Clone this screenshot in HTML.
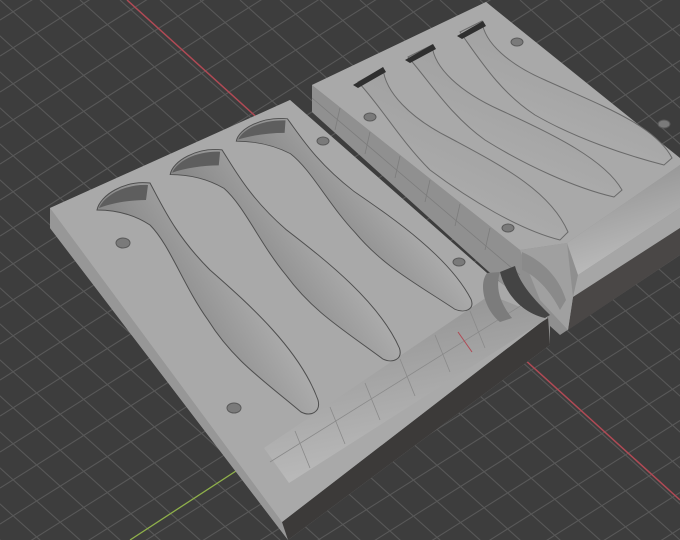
<!DOCTYPE html>
<html><head><style>
html,body{margin:0;padding:0;background:#3d3d3d;width:680px;height:540px;overflow:hidden}
svg{display:block;overflow:hidden}
</style></head><body>
<svg width="680" height="540" viewBox="0 0 680 540" xmlns="http://www.w3.org/2000/svg">
<defs>
<linearGradient id="lure" x1="0" y1="0" x2="1" y2="-0.6">
<stop offset="0" stop-color="#8a8a8a"/><stop offset="0.5" stop-color="#bdbdbd"/><stop offset="1" stop-color="#959595"/>
</linearGradient>
<linearGradient id="rl" x1="0" y1="1" x2="0.6" y2="0">
<stop offset="0" stop-color="#b4b4b4"/><stop offset="1" stop-color="#9c9c9c"/>
</linearGradient>
<linearGradient id="chan" x1="0" y1="0" x2="0.3" y2="1">
<stop offset="0" stop-color="#8c8c8c"/><stop offset="1" stop-color="#bcbcbc"/>
</linearGradient>
</defs>
<rect width="680" height="540" fill="#3d3d3d"/>
<g stroke="#585858" stroke-width="1.1" fill="none">
<path d="M-600 0 L600 1080 M-560 0 L640 1080 M-520 0 L680 1080 M-480 0 L720 1080 M-440 0 L760 1080 M-400 0 L800 1080 M-360 0 L840 1080 M-320 0 L880 1080 M-280 0 L920 1080 M-240 0 L960 1080 M-200 0 L1000 1080 M-160 0 L1040 1080 M-120 0 L1080 1080 M-80 0 L1120 1080 M-40 0 L1160 1080 M0 0 L1200 1080 M40 0 L1240 1080 M80 0 L1280 1080 M120 0 L1320 1080 M160 0 L1360 1080 M200 0 L1400 1080 M240 0 L1440 1080 M280 0 L1480 1080 M320 0 L1520 1080 M360 0 L1560 1080 M400 0 L1600 1080 M440 0 L1640 1080 M480 0 L1680 1080 M520 0 L1720 1080 M560 0 L1760 1080 M600 0 L1800 1080 M640 0 L1840 1080"/>
<path d="M0 20 L700 -420 M0 56 L700 -384 M0 92 L700 -348 M0 128 L700 -312 M0 164 L700 -276 M0 200 L700 -240 M0 236 L700 -204 M0 272 L700 -168 M0 308 L700 -132 M0 344 L700 -96 M0 380 L700 -60 M0 416 L700 -24 M0 452 L700 12 M0 488 L700 48 M0 524 L700 84 M0 560 L700 120 M0 596 L700 156 M0 632 L700 192 M0 668 L700 228 M0 704 L700 264 M0 740 L700 300 M0 776 L700 336 M0 812 L700 372 M0 848 L700 408 M0 884 L700 444 M0 920 L700 480 M0 956 L700 516 M0 992 L700 552 M0 1028 L700 588 M0 1064 L700 624 M0 1100 L700 660"/>
</g>
<line x1="127" y1="0" x2="680" y2="500" stroke="#b04a55" stroke-width="1.5"/>
<line x1="130" y1="540" x2="560" y2="260" stroke="#8fb04a" stroke-width="1.3"/>

<!-- right block -->
<polygon points="312,85 312,112 560,335 680,255 680,160 486,2" fill="#8f8f8f"/>
<polygon points="312,85 486,2 680,158 680,165 567,243 520,250" fill="#a9a9a9"/>
<polygon points="312,86 520,250 520,300 312,112" fill="#909090"/>
<g stroke="#7c7c7c" stroke-width="0.8"><line x1="312" y1="98" x2="520" y2="275"/><line x1="340" y1="108" x2="335" y2="130"/><line x1="370" y1="132" x2="365" y2="154"/><line x1="400" y1="156" x2="395" y2="178"/><line x1="430" y1="180" x2="425" y2="202"/><line x1="460" y1="204" x2="455" y2="226"/><line x1="490" y1="228" x2="485" y2="250"/></g>
<polygon points="567,243 680,165 680,208 578,275" fill="url(#chan)"/>
<polygon points="578,275 680,208 680,228 573,297" fill="#a6a6a6"/>
<polygon points="573,297 680,228 680,255 568,330" fill="#4a4746"/>
<path d="M520 250 L567 243 L573 297 L568 330 L540 300 Z" fill="#a0a0a0"/>
<path d="M522 252 C545 262 560 280 566 300 L560 310 C550 290 535 275 522 270 Z" fill="#8a8a8a"/>

<!-- right lures -->
<path d="M358 82 L383 68 C385 92 410 118 450 138 C500 165 550 190 568 232 L560 240 C520 230 470 200 430 170 C400 140 380 105 358 82 Z" fill="url(#rl)" stroke="#6a6a6a" stroke-width="1"/>
<path d="M408 57 L432 45 C434 68 460 92 500 110 C555 135 605 160 622 190 L614 197 C575 188 525 165 485 140 C450 115 430 82 408 57 Z" fill="url(#rl)" stroke="#6a6a6a" stroke-width="1"/>
<path d="M460 32 L482 21 C484 43 510 65 545 80 C600 105 655 125 672 158 L664 165 C625 155 575 138 535 115 C500 92 480 60 460 32 Z" fill="url(#rl)" stroke="#6a6a6a" stroke-width="1"/>
<polygon points="353,85 383,67 386,72 358,88" fill="#2f2f2f"/>
<polygon points="405,60 433,44 436,49 410,63" fill="#2f2f2f"/>
<polygon points="457,36 483,21 486,26 462,39" fill="#2f2f2f"/>
<g fill="#7a7a7a" stroke="#5a5a5a"><ellipse cx="370" cy="117" rx="6" ry="4"/><ellipse cx="517" cy="42" rx="6" ry="4"/><ellipse cx="664" cy="124" rx="6" ry="4"/><ellipse cx="508" cy="228" rx="6" ry="4"/></g>

<!-- left block -->
<polygon points="50,208 50,228 288,540 550,345 550,315 487,273 290,100" fill="#8e8e8e"/>
<polygon points="50,208 282,522 288,540 50,228" fill="#979797"/>
<polygon points="282,522 548,317 550,345 288,540" fill="#3c3a39"/>
<polygon points="50,208 290,100 487,273 548,317 282,522" fill="#a9a9a9"/>
<polygon points="264,448 490,295 548,318 289,483" fill="url(#chan)"/>
<g stroke="#8a8a8a" stroke-width="0.8"><line x1="270" y1="462" x2="530" y2="300"/><line x1="295" y1="431" x2="310" y2="468"/><line x1="330" y1="407" x2="345" y2="444"/><line x1="365" y1="383" x2="380" y2="420"/><line x1="400" y1="359" x2="415" y2="396"/><line x1="435" y1="335" x2="450" y2="372"/><line x1="470" y1="311" x2="485" y2="348"/></g>
<!-- left notch -->
<path d="M487 273 C478 285 485 310 500 322 L512 318 C500 303 495 288 500 272 Z" fill="#7c7c7c"/>
<path d="M500 272 C505 292 520 312 545 318 L550 315 C535 300 520 285 515 266 Z" fill="#444"/>
<line x1="458" y1="332" x2="472" y2="352" stroke="#b04a55" stroke-width="1"/>

<!-- left lures -->
<g id="L1">
<path d="M97 210 C100 195 125 180 150 183 C162 205 175 235 210 270 C250 305 300 350 318 400 C321 412 311 417 301 412 C263 380 233 360 208 320 C183 285 170 245 150 225 C130 212 110 210 97 210 Z" fill="url(#lure)" stroke="#4e4e4e" stroke-width="1"/>
<path d="M99 208 C105 195 125 184 148 185 L146 200 C130 200 112 203 99 208 Z" fill="#5e5e5e"/>
</g>
<use href="#L1" transform="matrix(1,0,0.0433,0.9135,64.1,-17.3)"/>
<use href="#L1" transform="matrix(1,0,0.0721,0.832,124.2,-33.5)"/>
<g fill="#7a7a7a" stroke="#5a5a5a"><ellipse cx="123" cy="243" rx="7" ry="5"/><ellipse cx="234" cy="408" rx="7" ry="5"/><ellipse cx="323" cy="141" rx="6" ry="4"/><ellipse cx="459" cy="262" rx="6" ry="4"/></g>
</svg>
</body></html>
